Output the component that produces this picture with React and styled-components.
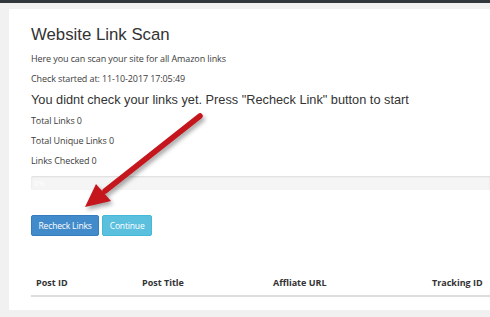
import React from 'react';
import styled, { createGlobalStyle } from 'styled-components';

const GlobalStyle = createGlobalStyle`
  html, body {
    margin: 0;
    padding: 0;
    background: #f1f1f1;
    overflow: hidden;
  }
`;

const AdminBar = styled.div`
  height: 3px;
  background: #32373c;
`;

const Wrap = styled.div`
  padding: 6px 0 0 9px;
`;

const Panel = styled.div`
  position: relative;
  background: #fff;
  padding: 15px 0 13px 22px;
`;

const Title = styled.h1`
  margin: 0 0 3px;
  font-family: "Liberation Sans", Arial, sans-serif;
  font-weight: 400;
  font-size: 16.8px;
  line-height: 22px;
  color: #333;
`;

const Line = styled.div`
  font-family: "Open Sans", sans-serif;
  font-size: 9px;
  line-height: 20px;
  color: #3c3c3c;
  letter-spacing: -0.1px;
`;

const Notice = styled.div`
  font-family: "Liberation Sans", Arial, sans-serif;
  font-size: 12.75px;
  line-height: 22px;
  color: #333;
`;

const Progress = styled.div`
  margin-top: 5px;
  height: 14px;
  background: #f5f5f5;
  box-shadow: inset 0 1px 2px rgba(0, 0, 0, 0.1);
  border-radius: 2px 0 0 2px;
  font-family: "Open Sans", sans-serif;
  font-size: 8px;
  line-height: 14px;
  color: #fff;
  padding-left: 3px;
`;

const Buttons = styled.div`
  display: flex;
  gap: 3px;
  margin-top: 25px;
`;

const Button = styled.button`
  box-sizing: border-box;
  height: 21px;
  padding: 0 6.5px;
  border: 1px solid ${(p) => (p.info ? '#46b8da' : '#357ebd')};
  background: ${(p) => (p.info ? '#5bc0de' : '#428bca')};
  border-radius: 2px;
  color: #fff;
  font-family: "Open Sans", sans-serif;
  font-size: 8.5px;
  letter-spacing: -0.15px;
  cursor: pointer;
`;

const TableHead = styled.div`
  display: grid;
  grid-template-columns: 106px 131px 159px 1fr;
  margin-top: 40px;
  border-bottom: 2px solid #ddd;
`;

const HeadCell = styled.div`
  padding: 0 5px 5px;
  font-family: "Open Sans", sans-serif;
  font-weight: 700;
  font-size: 9px;
  line-height: 14px;
  color: #333;
  white-space: nowrap;
`;

const Arrow = styled.svg`
  position: absolute;
  left: 60px;
  top: 95px;
  width: 160px;
  height: 120px;
  overflow: visible;
  filter: drop-shadow(2px 3px 2px rgba(0, 0, 0, 0.35));
`;

export default function App() {
  return (
    <>
      <GlobalStyle />
      <AdminBar />
      <Wrap>
        <Panel>
          <Title>Website Link Scan</Title>
          <Line>Here you can scan your site for all Amazon links</Line>
          <Line>Check started at: 11-10-2017 17:05:49</Line>
          <Notice>You didnt check your links yet. Press "Recheck Link" button to start</Notice>
          <Line>Total Links 0</Line>
          <Line>Total Unique Links 0</Line>
          <Line>Links Checked 0</Line>
          <Progress>0%</Progress>
          <Buttons>
            <Button>Recheck Links</Button>
            <Button info>Continue</Button>
          </Buttons>
          <TableHead>
            <HeadCell>Post ID</HeadCell>
            <HeadCell>Post Title</HeadCell>
            <HeadCell>Affliate URL</HeadCell>
            <HeadCell>Tracking ID</HeadCell>
          </TableHead>
          <Arrow viewBox="0 0 160 120">
            <line x1="131" y1="12" x2="36" y2="87" stroke="#c4161c" strokeWidth="5.5" strokeLinecap="round" />
            <polygon points="16,103 27,80 42,97" fill="#c4161c" />
          </Arrow>
        </Panel>
      </Wrap>
    </>
  );
}
